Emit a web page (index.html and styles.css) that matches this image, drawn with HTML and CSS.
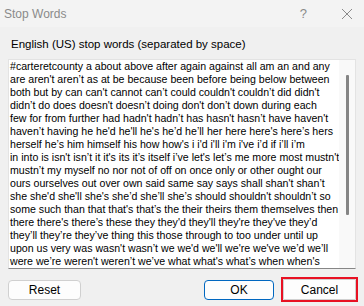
FILE: index.html
```html
<!DOCTYPE html>
<html>
<head>
<meta charset="utf-8">
<link rel="stylesheet" href="styles.css">
</head>
<body>
<div class="dialog">
  <div class="titlebar">
    <span class="title">Stop Words</span>
    <span class="tb-buttons">
      <span class="help">?</span>
      <svg class="close" width="12" height="12" viewBox="0 0 12 12"><path d="M1 1 L11 11 M11 1 L1 11" stroke="#8a8a8a" stroke-width="1" fill="none"/></svg>
    </span>
  </div>
  <div class="body">
    <div class="label">English (US) stop words (separated by space)</div>
    <div class="textbox">
      <div class="text">
        <div>#carteretcounty a about above after again against all am an and any</div>
        <div>are aren't aren’t as at be because been before being below between</div>
        <div>both but by can can't cannot can’t could couldn't couldn’t did didn't</div>
        <div>didn’t do does doesn't doesn’t doing don't don’t down during each</div>
        <div>few for from further had hadn't hadn’t has hasn't hasn’t have haven't</div>
        <div>haven’t having he he'd he'll he's he’d he’ll her here here's here’s hers</div>
        <div>herself he’s him himself his how how's i i'd i'll i'm i've i’d if i’ll i’m</div>
        <div>in into is isn't isn’t it it's its it’s itself i’ve let's let’s me more most mustn't</div>
        <div>mustn’t my myself no nor not of off on once only or other ought our</div>
        <div>ours ourselves out over own said same say says shall shan't shan’t</div>
        <div>she she'd she'll she's she’d she’ll she’s should shouldn't shouldn’t so</div>
        <div>some such than that that's that’s the their theirs them themselves then</div>
        <div>there there's there’s these they they'd they'll they're they've they’d</div>
        <div>they’ll they’re they’ve thing this those through to too under until up</div>
        <div>upon us very was wasn't wasn’t we we'd we'll we're we've we’d we’ll</div>
        <div>were we’re weren't weren’t we’ve what what's what’s when when's</div>
      </div>
      <div class="scrollbar"><div class="thumb"></div></div>
    </div>
    <div class="buttons">
      <button class="btn btn-reset">Reset</button>
      <div class="right">
        <button class="btn btn-ok">OK</button>
        <div class="focus-ring"><button class="btn btn-cancel">Cancel</button></div>
      </div>
    </div>
  </div>
</div>
</body>
</html>
```
FILE: styles.css
```css
html, body {
  margin: 0;
  padding: 0;
}
body {
  width: 364px;
  height: 306px;
  overflow: hidden;
  background: #f0f0f0;
  font-family: "Liberation Sans", Arial, sans-serif;
  font-size: 12px;
  color: #000;
}
.dialog {
  display: flex;
  flex-direction: column;
  height: 306px;
}
.titlebar {
  height: 27px;
  background: #f3f3f3;
  display: flex;
  align-items: center;
  justify-content: space-between;
  padding-left: 4px;
  padding-right: 11px;
}
.title {
  color: #8a8a8a;
  font-size: 12px;
}
.tb-buttons {
  display: flex;
  align-items: center;
  gap: 34px;
}
.help {
  color: #8a8a8a;
  font-size: 13px;
}
.close {
  display: block;
}
.body {
  padding: 0 8px;
  display: flex;
  flex-direction: column;
  flex: 1;
}
.label {
  font-size: 11.5px;
  padding: 10px 0 0 3px;
  height: 22px;
  box-sizing: border-box;
  line-height: 14px;
}
.textbox {
  margin-top: 10px;
  height: 210px;
  background: #fff;
  border-top: 1px solid #e3e3e3;
  border-left: 1px solid #e3e3e3;
  border-right: 1px solid #e3e3e3;
  border-bottom: 1px solid #868686;
  box-sizing: border-box;
  display: flex;
  overflow: hidden;
}
.text {
  flex: 1;
  padding: 0 0 0 1px;
  font-size: 10.6px;
  line-height: 13px;
  white-space: nowrap;
}
.scrollbar {
  width: 17px;
  flex: none;
  background: #f9f9f9;
  position: relative;
}
.thumb {
  position: absolute;
  left: 7px;
  top: 15px;
  width: 3px;
  height: 140px;
  background: #858585;
  border-radius: 1px;
}
.buttons {
  display: flex;
  justify-content: space-between;
  align-items: center;
  margin-top: 8px;
}
.right {
  display: flex;
  align-items: center;
  gap: 7px;
}
.btn {
  font-family: "Liberation Sans", Arial, sans-serif;
  font-size: 12px;
  height: 20px;
  background: #fdfdfd;
  border: 1px solid #d0d0d0;
  border-radius: 4px;
  padding: 0;
  color: #000;
}
.btn-reset {
  width: 73px;
}
.btn-ok {
  width: 70px;
  border-color: #0067c0;
}
.focus-ring {
  border: 2px solid #e81123;
  margin-right: -2px;
  display: flex;
}
.btn-cancel {
  width: 73px;
  height: 21px;
  border-radius: 1px;
}
```
